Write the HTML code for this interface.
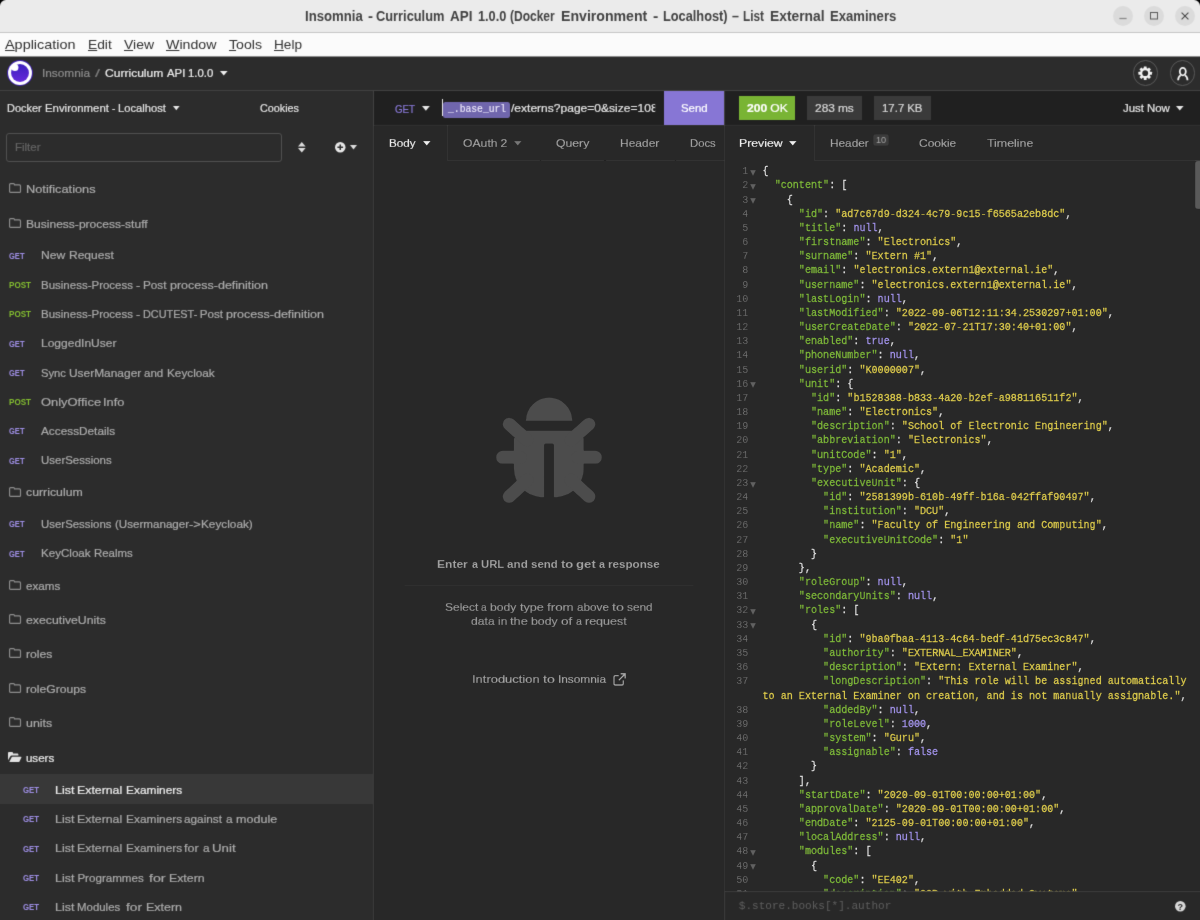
<!DOCTYPE html>
<html><head><meta charset="utf-8"><title>Insomnia</title>
<style>
html,body{margin:0;padding:0;}
body{width:1200px;height:920px;overflow:hidden;position:relative;background:#282828;font-family:"Liberation Sans",sans-serif;}
.t{position:absolute;white-space:pre;line-height:20px;transform-origin:0 50%;-webkit-text-stroke:0.22px currentColor;word-spacing:-0.3px;}
.b{position:absolute;}
.cl{position:absolute;left:762.5px;white-space:pre;font:10.1px/20px "Liberation Mono",monospace;color:#e2e2e2;-webkit-text-stroke:0.32px currentColor;}
.k{color:#7fb83b;}.s{color:#dbca4d;}.n{color:#a495ec;}
.ln{position:absolute;left:725px;width:23.4px;text-align:right;font:10.1px/20px "Liberation Mono",monospace;color:#727272;}
.fd{position:absolute;left:749.8px;width:0;height:0;border-left:3.1px solid transparent;border-right:3.1px solid transparent;border-top:6.4px solid #616161;}
svg{position:absolute;overflow:visible;}
</style></head><body><svg width="0" height="0" style="position:absolute"><filter id="soft" x="0" y="0" width="100%" height="100%" color-interpolation-filters="sRGB"><feConvolveMatrix order="3" kernelMatrix="0.015 0.085 0.015 0.085 0.6 0.085 0.015 0.085 0.015" edgeMode="duplicate" preserveAlpha="true"/></filter></svg><div id="root" style="position:absolute;left:0;top:0;width:1200px;height:920px;will-change:transform;filter:url(#soft)">

<!-- window chrome -->
<div class="b" style="left:0;top:0;width:1200px;height:33px;background:#000"></div>
<div class="b" style="left:0;top:0;width:1200px;height:32px;background:#ebebeb;border-radius:6px 6px 0 0;border-bottom:1px solid #c6c6c6"></div>
<div class="b" style="left:0;top:33px;width:1200px;height:23px;background:#fbfbfb"></div>
<div class="b" style="left:0;top:56px;width:1200px;height:1px;background:#8c8c8c"></div>
<div class="b" style="left:1112.7px;top:6px;width:20px;height:20px;border-radius:50%;background:#dbdbdb"></div>
<div class="b" style="left:1143.9px;top:6px;width:20px;height:20px;border-radius:50%;background:#dbdbdb"></div>
<div class="b" style="left:1175.3px;top:6px;width:20px;height:20px;border-radius:50%;background:#dbdbdb"></div>
<svg style="left:1112.7px;top:6px" width="20" height="20"><path d="M6.4 12.500h7.200" stroke="#8a8a8a" stroke-width="1.300" fill="none"/></svg>
<svg style="left:1143.9px;top:6px" width="20" height="20"><rect x="6.5" y="6.500" width="7" height="6.500" stroke="#5a5a5a" stroke-width="1" fill="none"/></svg>
<svg style="left:1175.3px;top:6px" width="20" height="20"><path d="M6.600 6.600l6.800 6.800M13.400 6.600l-6.800 6.800" stroke="#444" stroke-width="1.050" fill="none"/></svg>

<!-- app header -->
<div class="b" style="left:0;top:57px;width:1200px;height:33px;background:#2c2c2c"></div>
<div class="b" style="left:0;top:90px;width:1200px;height:1px;background:#414141"></div>
<svg style="left:6.85px;top:60.35px" width="26" height="26" viewBox="0 0 26 26"><defs><linearGradient id="lg" x1="0" y1="0" x2="0" y2="1"><stop offset="0" stop-color="#3c1fbd"/><stop offset="1" stop-color="#6529da"/></linearGradient></defs><circle cx="13" cy="13" r="12.9" fill="#3d1db4"/><circle cx="13" cy="13" r="11.95" fill="#fff"/><circle cx="13" cy="13" r="8.95" fill="url(#lg)"/><circle cx="7.9" cy="7.500" r="3.55" fill="#fff"/></svg>
<svg style="left:220px;top:70.8px" width="8" height="5"><path d="M0 0h7.6l-3.8 4.6z" fill="#eee"/></svg>
<!-- gear + user -->
<div class="b" style="left:1132.7px;top:60.300px;width:23.600px;height:23.600px;border:1px solid #595959;border-radius:50%"></div>
<div class="b" style="left:1169.9px;top:60.300px;width:23.600px;height:23.600px;border:1px solid #595959;border-radius:50%"></div>
<svg style="left:1138px;top:66px" width="14.400" height="14.400" viewBox="0 0 15 15"><g fill="#f4f4f4"><circle cx="7.500" cy="7.500" r="5.300"/><rect x="6" y=".4" width="3" height="14.200" rx=".4"/><rect x="6" y=".4" width="3" height="14.200" rx=".4" transform="rotate(45 7.500 7.500)"/><rect x="6" y=".4" width="3" height="14.200" rx=".4" transform="rotate(90 7.500 7.500)"/><rect x="6" y=".4" width="3" height="14.200" rx=".4" transform="rotate(135 7.500 7.500)"/></g><circle cx="7.500" cy="7.500" r="3" fill="#2c2c2c"/></svg>
<svg style="left:1175.500px;top:65.500px" width="14" height="16" viewBox="0 0 14 16"><ellipse cx="6.800" cy="5.600" rx="3" ry="3.700" fill="none" stroke="#f4f4f4" stroke-width="1.800"/><path d="M4.700 9.300C2.900 10.300 2.200 12 2.100 14.300M8.900 9.300C10.700 10.300 11.400 12 11.500 14.300" fill="none" stroke="#f4f4f4" stroke-width="1.800" stroke-linecap="butt"/></svg>

<!-- sidebar -->
<div class="b" style="left:0;top:91px;width:373px;height:829px;background:#2c2c2c"></div>
<div class="b" style="left:373px;top:91px;width:1px;height:829px;background:#414141"></div>
<div class="b" style="left:6px;top:133px;width:276px;height:29px;border:1px solid #505050;border-radius:3px;box-sizing:border-box"></div>
<svg style="left:173.2px;top:106.4px" width="7" height="5"><path d="M0 0h6.6l-3.3 4.2z" fill="#e6e6e6"/></svg>
<svg style="left:297.7px;top:141.7px" width="8" height="11"><path d="M0 4.4h7.6L3.8 0zM0 6h7.6L3.8 10.4z" fill="#ddd"/></svg>
<svg style="left:335px;top:141.7px" width="11" height="11" viewBox="0 0 11 11"><circle cx="5.25" cy="5.25" r="5.25" fill="#e8e8e8"/><path d="M5.25 2.4v5.7M2.4 5.25h5.7" stroke="#2c2c2c" stroke-width="1.5"/></svg>
<svg style="left:350px;top:145.2px" width="8" height="5"><path d="M0 0h7l-3.5 4.4z" fill="#ddd"/></svg>
<div class="b" style="left:0;top:774.3px;width:373px;height:29.4px;background:#383838"></div>

<!-- request pane -->
<div class="b" style="left:374px;top:91px;width:350px;height:34px;background:#202020"></div>
<div class="b" style="left:374px;top:125px;width:350px;height:1px;background:#363636"></div>
<div class="b" style="left:664px;top:91px;width:60px;height:34px;background:#8776d5"></div>
<div class="b" style="left:724px;top:91px;width:1px;height:829px;background:#414141"></div>
<svg style="left:422.2px;top:105.8px" width="8" height="5"><path d="M0 0h7.8l-3.9 4.7z" fill="#e8e8e8"/></svg>
<div class="b" style="left:442px;top:99px;width:1px;height:17px;background:#e8e8e8"></div>
<div class="b" style="left:443.3px;top:101.7px;width:67px;height:16.1px;background:#7066ad;border-radius:2.5px"></div>
<!-- request tabs -->
<div class="b" style="left:447px;top:125px;width:1px;height:36px;background:#414141"></div>
<div class="b" style="left:447px;top:160px;width:277px;height:1px;background:#414141"></div>
<div class="b" style="left:539.5px;top:160px;width:1.5px;height:1px;background:#282828"></div><div class="b" style="left:604px;top:160px;width:1.5px;height:1px;background:#282828"></div><div class="b" style="left:674.5px;top:160px;width:1.5px;height:1px;background:#282828"></div>
<svg style="left:422.5px;top:140.5px" width="8" height="5"><path d="M0 0h7.6l-3.8 4.6z" fill="#eee"/></svg>
<svg style="left:514.3px;top:140.5px" width="8" height="5"><path d="M0 0h7.6l-3.8 4.6z" fill="#777"/></svg>
<!-- bug -->
<svg style="left:485px;top:390px" width="130" height="125" viewBox="0 0 130 125">
<g fill="#4c4c4c" stroke="#4c4c4c" stroke-linecap="round">
<path d="M40.800 31A23.300 23.500 0 0 1 87.400 31z" stroke="none"/>
<path d="M40 40.800H88.300L98.800 48.500V78C98.800 95 86 107.300 68.900 107.300V55.200a1.500 1.500 0 0 0-1.500-1.500h-6.800a1.500 1.500 0 0 0-1.500 1.500V107.300C42 107.300 28.900 95 28.900 78V48.500z" stroke="none"/>
<path d="M24.200 34.200L42 50M103.900 34.200L86 50M17.500 67.300H35M110.500 67.300H93M24.200 106.500L42 90M103.900 106.500L86 90" stroke-width="13" fill="none"/>
</g></svg>
<div class="b" style="left:403.8px;top:585px;width:290px;height:1px;background:#3d3d3d"></div>
<svg style="left:613px;top:672.8px" width="13" height="13" viewBox="0 0 13 13"><path d="M10.3 7.2v3.6c0 .7-.5 1.2-1.2 1.2H2.2C1.5 12 1 11.500 1 10.800V3.900c0-.7.5-1.200 1.200-1.200h3.600" fill="none" stroke="#aaa" stroke-width="1.3"/><path d="M7.600.800h4.600v4.600M12 1L5.800 7.200" fill="none" stroke="#aaa" stroke-width="1.4"/></svg>

<!-- response pane -->
<div class="b" style="left:725px;top:91px;width:475px;height:34px;background:#202020"></div>
<div class="b" style="left:725px;top:125px;width:475px;height:1px;background:#363636"></div>
<div class="b" style="left:738.8px;top:96px;width:56.4px;height:24px;background:#79b434"></div>
<div class="b" style="left:807.2px;top:96px;width:54.8px;height:24px;background:#3a3a3a"></div>
<div class="b" style="left:874px;top:96px;width:57.2px;height:24px;background:#3a3a3a"></div>
<svg style="left:1176px;top:105.8px" width="8" height="5"><path d="M0 0h7.6l-3.8 4.6z" fill="#e6e6e6"/></svg>
<div class="b" style="left:813.8px;top:125px;width:1px;height:36px;background:#414141"></div>
<div class="b" style="left:813.8px;top:160px;width:387px;height:1px;background:#414141"></div>
<svg style="left:788.8px;top:140.5px" width="8" height="5"><path d="M0 0h7.6l-3.8 4.6z" fill="#eee"/></svg>
<div class="b" style="left:872.6px;top:133.6px;width:16px;height:12.8px;background:#3b3b3b;border-radius:3px"></div>
<div class="b" style="left:1195.4px;top:160.6px;width:5px;height:48.8px;background:#5a5a5a;border-radius:3px 0 0 3px"></div>

<span class="t" style="left:304.80px;top:6.35px;font:700 14px/20px 'Liberation Sans',sans-serif;color:#424242;transform:scaleX(0.9387);-webkit-text-stroke:0;">Insomnia</span>
<span class="t" style="left:367.50px;top:6.35px;font:700 14px/20px 'Liberation Sans',sans-serif;color:#424242;transform:scaleX(1.0702);-webkit-text-stroke:0;">-</span>
<span class="t" style="left:376.10px;top:6.35px;font:700 14px/20px 'Liberation Sans',sans-serif;color:#424242;transform:scaleX(0.9158);-webkit-text-stroke:0;">Curriculum</span>
<span class="t" style="left:450.10px;top:6.35px;font:700 14px/20px 'Liberation Sans',sans-serif;color:#424242;transform:scaleX(0.9596);-webkit-text-stroke:0;">API</span>
<span class="t" style="left:477.90px;top:6.35px;font:700 14px/20px 'Liberation Sans',sans-serif;color:#424242;transform:scaleX(0.9088);-webkit-text-stroke:0;">1.0.0</span>
<span class="t" style="left:510.30px;top:6.35px;font:700 14px/20px 'Liberation Sans',sans-serif;color:#424242;transform:scaleX(0.8573);-webkit-text-stroke:0;">(Docker</span>
<span class="t" style="left:560.50px;top:6.35px;font:700 14px/20px 'Liberation Sans',sans-serif;color:#424242;transform:scaleX(1.0084);-webkit-text-stroke:0;">Environment</span>
<span class="t" style="left:653.10px;top:6.35px;font:700 14px/20px 'Liberation Sans',sans-serif;color:#424242;transform:scaleX(1.1344);-webkit-text-stroke:0;">-</span>
<span class="t" style="left:662.70px;top:6.35px;font:700 14px/20px 'Liberation Sans',sans-serif;color:#424242;transform:scaleX(0.9127);-webkit-text-stroke:0;">Localhost)</span>
<span class="t" style="left:731.80px;top:6.35px;font:700 14px/20px 'Liberation Sans',sans-serif;color:#424242;transform:scaleX(0.8850);-webkit-text-stroke:0;">–</span>
<span class="t" style="left:742.90px;top:6.35px;font:700 14px/20px 'Liberation Sans',sans-serif;color:#424242;transform:scaleX(0.8397);-webkit-text-stroke:0;">List</span>
<span class="t" style="left:769.70px;top:6.35px;font:700 14px/20px 'Liberation Sans',sans-serif;color:#424242;transform:scaleX(0.9864);-webkit-text-stroke:0;">External</span>
<span class="t" style="left:829.50px;top:6.35px;font:700 14px/20px 'Liberation Sans',sans-serif;color:#424242;transform:scaleX(0.9361);-webkit-text-stroke:0;">Examiners</span>
<span class="t" style="left:5.00px;top:34.57px;font:400 13.5px/20px 'Liberation Sans',sans-serif;color:#303030;transform:scaleX(1.0672);-webkit-text-stroke:0;"><u>A</u>pplication</span>
<span class="t" style="left:88.00px;top:34.57px;font:400 13.5px/20px 'Liberation Sans',sans-serif;color:#303030;transform:scaleX(1.0201);-webkit-text-stroke:0;"><u>E</u>dit</span>
<span class="t" style="left:124.00px;top:34.57px;font:400 13.5px/20px 'Liberation Sans',sans-serif;color:#303030;transform:scaleX(1.0334);-webkit-text-stroke:0;"><u>V</u>iew</span>
<span class="t" style="left:166.00px;top:34.57px;font:400 13.5px/20px 'Liberation Sans',sans-serif;color:#303030;transform:scaleX(1.0514);-webkit-text-stroke:0;"><u>W</u>indow</span>
<span class="t" style="left:228.50px;top:34.57px;font:400 13.5px/20px 'Liberation Sans',sans-serif;color:#303030;transform:scaleX(1.0471);-webkit-text-stroke:0;"><u>T</u>ools</span>
<span class="t" style="left:274.00px;top:34.57px;font:400 13.5px/20px 'Liberation Sans',sans-serif;color:#303030;transform:scaleX(1.0084);-webkit-text-stroke:0;"><u>H</u>elp</span>
<span class="t" style="left:42.00px;top:63.28px;font:400 11.6px/20px 'Liberation Sans',sans-serif;color:#8c8c8c;transform:scaleX(1.0203);">Insomnia</span>
<span class="t" style="left:95.00px;top:63.28px;font:400 11.6px/20px 'Liberation Sans',sans-serif;color:#7c7c7c;transform:scaleX(1.5459);">/</span>
<span class="t" style="left:104.70px;top:63.28px;font:400 11.6px/20px 'Liberation Sans',sans-serif;color:#ececec;transform:scaleX(1.0402);">Curriculum</span>
<span class="t" style="left:166.70px;top:63.28px;font:400 11.6px/20px 'Liberation Sans',sans-serif;color:#ececec;transform:scaleX(0.9793);">API</span>
<span class="t" style="left:188.45px;top:63.28px;font:400 11.6px/20px 'Liberation Sans',sans-serif;color:#ececec;transform:scaleX(0.9807);">1.0.0</span>
<span class="t" style="left:7.10px;top:97.98px;font:400 11.6px/20px 'Liberation Sans',sans-serif;color:#e2e2e2;transform:scaleX(0.9433);">Docker</span>
<span class="t" style="left:45.35px;top:97.98px;font:400 11.6px/20px 'Liberation Sans',sans-serif;color:#e2e2e2;transform:scaleX(0.9817);">Environment</span>
<span class="t" style="left:112.10px;top:97.98px;font:400 11.6px/20px 'Liberation Sans',sans-serif;color:#e2e2e2;transform:scaleX(0.8774);">-</span>
<span class="t" style="left:117.85px;top:97.98px;font:400 11.6px/20px 'Liberation Sans',sans-serif;color:#e2e2e2;transform:scaleX(0.9649);">Localhost</span>
<span class="t" style="left:260.00px;top:97.98px;font:400 11.6px/20px 'Liberation Sans',sans-serif;color:#e2e2e2;transform:scaleX(0.9310);">Cookies</span>
<span class="t" style="left:14.50px;top:137.23px;font:400 11.6px/20px 'Liberation Sans',sans-serif;color:#646464;transform:scaleX(0.9897);">Filter</span>
<span class="t" style="left:25.90px;top:179.23px;font:400 11.6px/20px 'Liberation Sans',sans-serif;color:#aaaaaa;transform:scaleX(1.1020);">Notifications</span>
<span class="t" style="left:25.90px;top:213.73px;font:400 11.6px/20px 'Liberation Sans',sans-serif;color:#aaaaaa;transform:scaleX(1.0388);">Business-process-stuff</span>
<span class="t" style="left:25.90px;top:482.48px;font:400 11.6px/20px 'Liberation Sans',sans-serif;color:#aaaaaa;transform:scaleX(1.0623);">curriculum</span>
<span class="t" style="left:25.90px;top:575.58px;font:400 11.6px/20px 'Liberation Sans',sans-serif;color:#aaaaaa;transform:scaleX(1.0042);">exams</span>
<span class="t" style="left:25.90px;top:609.88px;font:400 11.6px/20px 'Liberation Sans',sans-serif;color:#aaaaaa;transform:scaleX(1.0583);">executiveUnits</span>
<span class="t" style="left:25.90px;top:644.18px;font:400 11.6px/20px 'Liberation Sans',sans-serif;color:#aaaaaa;transform:scaleX(1.0501);">roles</span>
<span class="t" style="left:25.90px;top:678.58px;font:400 11.6px/20px 'Liberation Sans',sans-serif;color:#aaaaaa;transform:scaleX(1.0495);">roleGroups</span>
<span class="t" style="left:25.90px;top:712.98px;font:400 11.6px/20px 'Liberation Sans',sans-serif;color:#aaaaaa;transform:scaleX(1.0694);">units</span>
<span class="t" style="left:25.90px;top:747.68px;font:400 11.6px/20px 'Liberation Sans',sans-serif;color:#e8e8e8;">users</span>
<span class="t" style="left:9.00px;top:245.67px;font:700 9.6px/20px 'Liberation Sans',sans-serif;color:#9f8fe6;transform:scaleX(0.7854);-webkit-text-stroke:0;">GET</span>
<span class="t" style="left:41.00px;top:245.48px;font:400 11.6px/20px 'Liberation Sans',sans-serif;color:#aaaaaa;transform:scaleX(1.0473);">New</span>
<span class="t" style="left:68.50px;top:245.48px;font:400 11.6px/20px 'Liberation Sans',sans-serif;color:#aaaaaa;transform:scaleX(1.0373);">Request</span>
<span class="t" style="left:9.00px;top:274.97px;font:700 9.6px/20px 'Liberation Sans',sans-serif;color:#84bf30;transform:scaleX(0.8421);-webkit-text-stroke:0;">POST</span>
<span class="t" style="left:41.00px;top:274.78px;font:400 11.6px/20px 'Liberation Sans',sans-serif;color:#aaaaaa;transform:scaleX(0.9914);">Business-Process</span>
<span class="t" style="left:136.00px;top:274.78px;font:400 11.6px/20px 'Liberation Sans',sans-serif;color:#aaaaaa;transform:scaleX(1.0968);">-</span>
<span class="t" style="left:143.00px;top:274.78px;font:400 11.6px/20px 'Liberation Sans',sans-serif;color:#aaaaaa;transform:scaleX(1.0128);">Post</span>
<span class="t" style="left:169.75px;top:274.78px;font:400 11.6px/20px 'Liberation Sans',sans-serif;color:#aaaaaa;transform:scaleX(1.0784);">process-definition</span>
<span class="t" style="left:9.00px;top:304.27px;font:700 9.6px/20px 'Liberation Sans',sans-serif;color:#84bf30;transform:scaleX(0.8421);-webkit-text-stroke:0;">POST</span>
<span class="t" style="left:41.00px;top:304.08px;font:400 11.6px/20px 'Liberation Sans',sans-serif;color:#aaaaaa;transform:scaleX(0.9914);">Business-Process</span>
<span class="t" style="left:136.00px;top:304.08px;font:400 11.6px/20px 'Liberation Sans',sans-serif;color:#aaaaaa;transform:scaleX(1.0968);">-</span>
<span class="t" style="left:143.00px;top:304.08px;font:400 11.6px/20px 'Liberation Sans',sans-serif;color:#aaaaaa;transform:scaleX(0.9358);">DCUTEST-</span>
<span class="t" style="left:199.75px;top:304.08px;font:400 11.6px/20px 'Liberation Sans',sans-serif;color:#aaaaaa;">Post</span>
<span class="t" style="left:226.25px;top:304.08px;font:400 11.6px/20px 'Liberation Sans',sans-serif;color:#aaaaaa;transform:scaleX(1.0784);">process-definition</span>
<span class="t" style="left:9.00px;top:333.57px;font:700 9.6px/20px 'Liberation Sans',sans-serif;color:#9f8fe6;transform:scaleX(0.7854);-webkit-text-stroke:0;">GET</span>
<span class="t" style="left:41.00px;top:333.38px;font:400 11.6px/20px 'Liberation Sans',sans-serif;color:#aaaaaa;transform:scaleX(1.0365);">LoggedInUser</span>
<span class="t" style="left:9.00px;top:362.87px;font:700 9.6px/20px 'Liberation Sans',sans-serif;color:#9f8fe6;transform:scaleX(0.7854);-webkit-text-stroke:0;">GET</span>
<span class="t" style="left:41.00px;top:362.68px;font:400 11.6px/20px 'Liberation Sans',sans-serif;color:#aaaaaa;transform:scaleX(0.9697);">Sync</span>
<span class="t" style="left:68.75px;top:362.68px;font:400 11.6px/20px 'Liberation Sans',sans-serif;color:#aaaaaa;transform:scaleX(1.0285);">UserManager</span>
<span class="t" style="left:144.25px;top:362.68px;font:400 11.6px/20px 'Liberation Sans',sans-serif;color:#aaaaaa;transform:scaleX(0.9952);">and</span>
<span class="t" style="left:167.25px;top:362.68px;font:400 11.6px/20px 'Liberation Sans',sans-serif;color:#aaaaaa;transform:scaleX(1.0149);">Keycloak</span>
<span class="t" style="left:9.00px;top:392.17px;font:700 9.6px/20px 'Liberation Sans',sans-serif;color:#84bf30;transform:scaleX(0.8421);-webkit-text-stroke:0;">POST</span>
<span class="t" style="left:40.80px;top:391.98px;font:400 11.6px/20px 'Liberation Sans',sans-serif;color:#aaaaaa;transform:scaleX(1.1146);">OnlyOffice</span>
<span class="t" style="left:103.20px;top:391.98px;font:400 11.6px/20px 'Liberation Sans',sans-serif;color:#aaaaaa;transform:scaleX(1.1011);">Info</span>
<span class="t" style="left:9.00px;top:421.37px;font:700 9.6px/20px 'Liberation Sans',sans-serif;color:#9f8fe6;transform:scaleX(0.7854);-webkit-text-stroke:0;">GET</span>
<span class="t" style="left:41.00px;top:421.18px;font:400 11.6px/20px 'Liberation Sans',sans-serif;color:#aaaaaa;transform:scaleX(1.0177);">AccessDetails</span>
<span class="t" style="left:9.00px;top:450.67px;font:700 9.6px/20px 'Liberation Sans',sans-serif;color:#9f8fe6;transform:scaleX(0.7854);-webkit-text-stroke:0;">GET</span>
<span class="t" style="left:41.00px;top:450.48px;font:400 11.6px/20px 'Liberation Sans',sans-serif;color:#aaaaaa;transform:scaleX(0.9884);">UserSessions</span>
<span class="t" style="left:9.00px;top:514.17px;font:700 9.6px/20px 'Liberation Sans',sans-serif;color:#9f8fe6;transform:scaleX(0.7854);-webkit-text-stroke:0;">GET</span>
<span class="t" style="left:41.00px;top:513.98px;font:400 11.6px/20px 'Liberation Sans',sans-serif;color:#aaaaaa;transform:scaleX(0.9856);">UserSessions</span>
<span class="t" style="left:115.00px;top:513.98px;font:400 11.6px/20px 'Liberation Sans',sans-serif;color:#aaaaaa;">(Usermanager</span>
<span class="t" style="left:189.25px;top:513.98px;font:400 11.6px/20px 'Liberation Sans',sans-serif;color:#aaaaaa;transform:scaleX(1.1043);">-&gt;</span>
<span class="t" style="left:201.25px;top:513.98px;font:400 11.6px/20px 'Liberation Sans',sans-serif;color:#aaaaaa;transform:scaleX(1.0166);">Keycloak)</span>
<span class="t" style="left:9.00px;top:543.57px;font:700 9.6px/20px 'Liberation Sans',sans-serif;color:#9f8fe6;transform:scaleX(0.7854);-webkit-text-stroke:0;">GET</span>
<span class="t" style="left:41.00px;top:543.38px;font:400 11.6px/20px 'Liberation Sans',sans-serif;color:#aaaaaa;">KeyCloak</span>
<span class="t" style="left:94.25px;top:543.38px;font:400 11.6px/20px 'Liberation Sans',sans-serif;color:#aaaaaa;transform:scaleX(0.9857);">Realms</span>
<span class="t" style="left:23.30px;top:780.17px;font:700 9.6px/20px 'Liberation Sans',sans-serif;color:#9f8fe6;transform:scaleX(0.8108);-webkit-text-stroke:0;">GET</span>
<span class="t" style="left:55.00px;top:779.98px;font:400 11.6px/20px 'Liberation Sans',sans-serif;color:#ececec;transform:scaleX(1.0750);">List</span>
<span class="t" style="left:77.40px;top:779.98px;font:400 11.6px/20px 'Liberation Sans',sans-serif;color:#ececec;transform:scaleX(1.0627);">External</span>
<span class="t" style="left:125.80px;top:779.98px;font:400 11.6px/20px 'Liberation Sans',sans-serif;color:#ececec;transform:scaleX(1.0262);">Examiners</span>
<span class="t" style="left:23.30px;top:809.37px;font:700 9.6px/20px 'Liberation Sans',sans-serif;color:#9f8fe6;transform:scaleX(0.8108);-webkit-text-stroke:0;">GET</span>
<span class="t" style="left:55.00px;top:809.18px;font:400 11.6px/20px 'Liberation Sans',sans-serif;color:#aaaaaa;transform:scaleX(1.0750);">List</span>
<span class="t" style="left:77.40px;top:809.18px;font:400 11.6px/20px 'Liberation Sans',sans-serif;color:#aaaaaa;transform:scaleX(1.0627);">External</span>
<span class="t" style="left:125.80px;top:809.18px;font:400 11.6px/20px 'Liberation Sans',sans-serif;color:#aaaaaa;transform:scaleX(1.0262);">Examiners</span>
<span class="t" style="left:184.40px;top:809.18px;font:400 11.6px/20px 'Liberation Sans',sans-serif;color:#aaaaaa;transform:scaleX(1.0163);">against</span>
<span class="t" style="left:226.40px;top:809.18px;font:400 11.6px/20px 'Liberation Sans',sans-serif;color:#aaaaaa;transform:scaleX(1.0228);">a</span>
<span class="t" style="left:235.80px;top:809.18px;font:400 11.6px/20px 'Liberation Sans',sans-serif;color:#aaaaaa;transform:scaleX(1.0833);">module</span>
<span class="t" style="left:23.30px;top:838.67px;font:700 9.6px/20px 'Liberation Sans',sans-serif;color:#9f8fe6;transform:scaleX(0.8108);-webkit-text-stroke:0;">GET</span>
<span class="t" style="left:55.00px;top:838.48px;font:400 11.6px/20px 'Liberation Sans',sans-serif;color:#aaaaaa;transform:scaleX(1.0750);">List</span>
<span class="t" style="left:77.40px;top:838.48px;font:400 11.6px/20px 'Liberation Sans',sans-serif;color:#aaaaaa;transform:scaleX(1.0627);">External</span>
<span class="t" style="left:125.80px;top:838.48px;font:400 11.6px/20px 'Liberation Sans',sans-serif;color:#aaaaaa;transform:scaleX(1.0262);">Examiners</span>
<span class="t" style="left:184.40px;top:838.48px;font:400 11.6px/20px 'Liberation Sans',sans-serif;color:#aaaaaa;transform:scaleX(1.0790);">for</span>
<span class="t" style="left:203.00px;top:838.48px;font:400 11.6px/20px 'Liberation Sans',sans-serif;color:#aaaaaa;transform:scaleX(1.0228);">a</span>
<span class="t" style="left:212.40px;top:838.48px;font:400 11.6px/20px 'Liberation Sans',sans-serif;color:#aaaaaa;transform:scaleX(1.1442);">Unit</span>
<span class="t" style="left:23.30px;top:867.87px;font:700 9.6px/20px 'Liberation Sans',sans-serif;color:#9f8fe6;transform:scaleX(0.8108);-webkit-text-stroke:0;">GET</span>
<span class="t" style="left:55.00px;top:867.68px;font:400 11.6px/20px 'Liberation Sans',sans-serif;color:#aaaaaa;transform:scaleX(1.0750);">List</span>
<span class="t" style="left:77.40px;top:867.68px;font:400 11.6px/20px 'Liberation Sans',sans-serif;color:#aaaaaa;">Programmes</span>
<span class="t" style="left:148.80px;top:867.68px;font:400 11.6px/20px 'Liberation Sans',sans-serif;color:#aaaaaa;transform:scaleX(1.2268);">for</span>
<span class="t" style="left:168.80px;top:867.68px;font:400 11.6px/20px 'Liberation Sans',sans-serif;color:#aaaaaa;transform:scaleX(1.0622);">Extern</span>
<span class="t" style="left:23.30px;top:897.07px;font:700 9.6px/20px 'Liberation Sans',sans-serif;color:#9f8fe6;transform:scaleX(0.8108);-webkit-text-stroke:0;">GET</span>
<span class="t" style="left:55.00px;top:896.88px;font:400 11.6px/20px 'Liberation Sans',sans-serif;color:#aaaaaa;transform:scaleX(1.0750);">List</span>
<span class="t" style="left:77.40px;top:896.88px;font:400 11.6px/20px 'Liberation Sans',sans-serif;color:#aaaaaa;transform:scaleX(0.9857);">Modules</span>
<span class="t" style="left:126.40px;top:896.88px;font:400 11.6px/20px 'Liberation Sans',sans-serif;color:#aaaaaa;transform:scaleX(1.1824);">for</span>
<span class="t" style="left:146.00px;top:896.88px;font:400 11.6px/20px 'Liberation Sans',sans-serif;color:#aaaaaa;transform:scaleX(1.0741);">Extern</span>
<span class="t" style="left:394.70px;top:98.78px;font:400 11.6px/20px 'Liberation Sans',sans-serif;color:#8979d8;transform:scaleX(0.8430);">GET</span>
<span class="t" style="left:447.60px;top:100.21px;font:400 10.1px/20px 'Liberation Mono',monospace;color:#ece8fa;transform:scaleX(0.9607);-webkit-text-stroke:0.15px currentColor;">_.base_url</span>
<span class="t" style="left:511.20px;top:98.28px;font:400 11.6px/20px 'Liberation Sans',sans-serif;color:#e4e4e4;transform:scaleX(1.0385);clip-path:inset(0 2.3px 0 0);">/externs?page=0&amp;size=108</span>
<span class="t" style="left:680.70px;top:98.48px;font:400 11.6px/20px 'Liberation Sans',sans-serif;color:#fff;transform:scaleX(0.9823);">Send</span>
<span class="t" style="left:388.70px;top:132.73px;font:400 11.6px/20px 'Liberation Sans',sans-serif;color:#e8e8e8;transform:scaleX(1.0043);">Body</span>
<span class="t" style="left:463.30px;top:132.68px;font:400 11.6px/20px 'Liberation Sans',sans-serif;color:#a2a2a2;transform:scaleX(1.0509);">OAuth 2</span>
<span class="t" style="left:555.70px;top:132.68px;font:400 11.6px/20px 'Liberation Sans',sans-serif;color:#a2a2a2;transform:scaleX(1.0545);">Query</span>
<span class="t" style="left:620.00px;top:132.68px;font:400 11.6px/20px 'Liberation Sans',sans-serif;color:#a2a2a2;transform:scaleX(1.0334);">Header</span>
<span class="t" style="left:690.30px;top:132.68px;font:400 11.6px/20px 'Liberation Sans',sans-serif;color:#a2a2a2;transform:scaleX(0.9727);">Docs</span>
<span class="t" style="left:437.20px;top:554.48px;font:700 11.6px/20px 'Liberation Sans',sans-serif;color:#a0a0a0;transform:scaleX(1.0391);-webkit-text-stroke:0;">Enter</span>
<span class="t" style="left:471.60px;top:554.48px;font:700 11.6px/20px 'Liberation Sans',sans-serif;color:#a0a0a0;transform:scaleX(0.9298);-webkit-text-stroke:0;">a</span>
<span class="t" style="left:481.20px;top:554.48px;font:700 11.6px/20px 'Liberation Sans',sans-serif;color:#a0a0a0;transform:scaleX(0.9736);-webkit-text-stroke:0;">URL</span>
<span class="t" style="left:507.20px;top:554.48px;font:700 11.6px/20px 'Liberation Sans',sans-serif;color:#a0a0a0;transform:scaleX(1.0085);-webkit-text-stroke:0;">and</span>
<span class="t" style="left:531.20px;top:554.48px;font:700 11.6px/20px 'Liberation Sans',sans-serif;color:#a0a0a0;transform:scaleX(0.9903);-webkit-text-stroke:0;">send</span>
<span class="t" style="left:560.60px;top:554.48px;font:700 11.6px/20px 'Liberation Sans',sans-serif;color:#a0a0a0;transform:scaleX(1.1321);-webkit-text-stroke:0;">to</span>
<span class="t" style="left:576.20px;top:554.48px;font:700 11.6px/20px 'Liberation Sans',sans-serif;color:#a0a0a0;transform:scaleX(1.1385);-webkit-text-stroke:0;">get</span>
<span class="t" style="left:598.60px;top:554.48px;font:700 11.6px/20px 'Liberation Sans',sans-serif;color:#a0a0a0;transform:scaleX(0.9298);-webkit-text-stroke:0;">a</span>
<span class="t" style="left:608.20px;top:554.48px;font:700 11.6px/20px 'Liberation Sans',sans-serif;color:#a0a0a0;transform:scaleX(1.0046);-webkit-text-stroke:0;">response</span>
<span class="t" style="left:444.70px;top:597.38px;font:400 11.6px/20px 'Liberation Sans',sans-serif;color:#999999;transform:scaleX(1.0331);">Select</span>
<span class="t" style="left:481.30px;top:597.38px;font:400 11.6px/20px 'Liberation Sans',sans-serif;color:#999999;transform:scaleX(0.8833);">a</span>
<span class="t" style="left:490.30px;top:597.38px;font:400 11.6px/20px 'Liberation Sans',sans-serif;color:#999999;transform:scaleX(1.0461);">body</span>
<span class="t" style="left:520.10px;top:597.38px;font:400 11.6px/20px 'Liberation Sans',sans-serif;color:#999999;transform:scaleX(1.0902);">type</span>
<span class="t" style="left:546.70px;top:597.38px;font:400 11.6px/20px 'Liberation Sans',sans-serif;color:#999999;transform:scaleX(1.1515);">from</span>
<span class="t" style="left:576.70px;top:597.38px;font:400 11.6px/20px 'Liberation Sans',sans-serif;color:#999999;transform:scaleX(1.0097);">above</span>
<span class="t" style="left:611.70px;top:597.38px;font:400 11.6px/20px 'Liberation Sans',sans-serif;color:#999999;transform:scaleX(1.2304);">to</span>
<span class="t" style="left:626.70px;top:597.38px;font:400 11.6px/20px 'Liberation Sans',sans-serif;color:#999999;transform:scaleX(1.0222);">send</span>
<span class="t" style="left:470.70px;top:611.18px;font:400 11.6px/20px 'Liberation Sans',sans-serif;color:#999999;transform:scaleX(1.0497);">data</span>
<span class="t" style="left:497.70px;top:611.18px;font:400 11.6px/20px 'Liberation Sans',sans-serif;color:#999999;transform:scaleX(1.0298);">in</span>
<span class="t" style="left:510.10px;top:611.18px;font:400 11.6px/20px 'Liberation Sans',sans-serif;color:#999999;transform:scaleX(1.1101);">the</span>
<span class="t" style="left:531.30px;top:611.18px;font:400 11.6px/20px 'Liberation Sans',sans-serif;color:#999999;transform:scaleX(1.0620);">body</span>
<span class="t" style="left:561.10px;top:611.18px;font:400 11.6px/20px 'Liberation Sans',sans-serif;color:#999999;transform:scaleX(1.1683);">of</span>
<span class="t" style="left:575.70px;top:611.18px;font:400 11.6px/20px 'Liberation Sans',sans-serif;color:#999999;transform:scaleX(0.9143);">a</span>
<span class="t" style="left:585.30px;top:611.18px;font:400 11.6px/20px 'Liberation Sans',sans-serif;color:#999999;transform:scaleX(1.0783);">request</span>
<span class="t" style="left:472.00px;top:669.48px;font:400 11.6px/20px 'Liberation Sans',sans-serif;color:#a2a2a2;transform:scaleX(1.1156);">Introduction</span>
<span class="t" style="left:542.60px;top:669.48px;font:400 11.6px/20px 'Liberation Sans',sans-serif;color:#a2a2a2;transform:scaleX(1.2200);">to</span>
<span class="t" style="left:557.60px;top:669.48px;font:400 11.6px/20px 'Liberation Sans',sans-serif;color:#a2a2a2;transform:scaleX(1.0203);">Insomnia</span>
<span class="t" style="left:746.80px;top:98.48px;font:400 11.6px/20px 'Liberation Sans',sans-serif;color:#fff;transform:scaleX(1.0453);"><b>200</b> OK</span>
<span class="t" style="left:815.20px;top:98.48px;font:400 11.6px/20px 'Liberation Sans',sans-serif;color:#d8d8d8;transform:scaleX(1.0282);">283 ms</span>
<span class="t" style="left:882.40px;top:98.48px;font:400 11.6px/20px 'Liberation Sans',sans-serif;color:#d8d8d8;transform:scaleX(0.9865);">17.7 KB</span>
<span class="t" style="left:1123.20px;top:98.48px;font:400 11.6px/20px 'Liberation Sans',sans-serif;color:#e6e6e6;transform:scaleX(0.9875);">Just Now</span>
<span class="t" style="left:739.20px;top:132.68px;font:400 11.6px/20px 'Liberation Sans',sans-serif;color:#eee;transform:scaleX(1.0570);">Preview</span>
<span class="t" style="left:830.40px;top:132.68px;font:400 11.6px/20px 'Liberation Sans',sans-serif;color:#a2a2a2;transform:scaleX(1.0202);">Header</span>
<span class="t" style="left:919.20px;top:132.68px;font:400 11.6px/20px 'Liberation Sans',sans-serif;color:#a2a2a2;transform:scaleX(1.0306);">Cookie</span>
<span class="t" style="left:987.20px;top:132.68px;font:400 11.6px/20px 'Liberation Sans',sans-serif;color:#a2a2a2;transform:scaleX(1.0694);">Timeline</span>
<span class="t" style="left:875.60px;top:130.31px;font:400 9.5px/20px 'Liberation Sans',sans-serif;color:#a6a6a6;transform:scaleX(0.9643);-webkit-text-stroke:0;">10</span>
<svg style="left:9px;top:183.35px" width="12" height="10" viewBox="0 0 12 10"><path d="M1.6.6h2.9c.5 0 1 .4 1 1v.3h5c.6 0 1 .4 1 1v5.5c0 .6-.4 1-1 1H1.6c-.6 0-1-.4-1-1V1.600c0-.6.4-1 1-1z" fill="none" stroke="#8e8e8e" stroke-width="1.15"/></svg>
<svg style="left:9px;top:217.85px" width="12" height="10" viewBox="0 0 12 10"><path d="M1.6.6h2.9c.5 0 1 .4 1 1v.3h5c.6 0 1 .4 1 1v5.5c0 .6-.4 1-1 1H1.6c-.6 0-1-.4-1-1V1.600c0-.6.4-1 1-1z" fill="none" stroke="#8e8e8e" stroke-width="1.15"/></svg>
<svg style="left:9px;top:486.60px" width="12" height="10" viewBox="0 0 12 10"><path d="M1.6.6h2.9c.5 0 1 .4 1 1v.3h5c.6 0 1 .4 1 1v5.5c0 .6-.4 1-1 1H1.6c-.6 0-1-.4-1-1V1.600c0-.6.4-1 1-1z" fill="none" stroke="#8e8e8e" stroke-width="1.15"/></svg>
<svg style="left:9px;top:579.70px" width="12" height="10" viewBox="0 0 12 10"><path d="M1.6.6h2.9c.5 0 1 .4 1 1v.3h5c.6 0 1 .4 1 1v5.5c0 .6-.4 1-1 1H1.6c-.6 0-1-.4-1-1V1.600c0-.6.4-1 1-1z" fill="none" stroke="#8e8e8e" stroke-width="1.15"/></svg>
<svg style="left:9px;top:614.00px" width="12" height="10" viewBox="0 0 12 10"><path d="M1.6.6h2.9c.5 0 1 .4 1 1v.3h5c.6 0 1 .4 1 1v5.5c0 .6-.4 1-1 1H1.6c-.6 0-1-.4-1-1V1.600c0-.6.4-1 1-1z" fill="none" stroke="#8e8e8e" stroke-width="1.15"/></svg>
<svg style="left:9px;top:648.30px" width="12" height="10" viewBox="0 0 12 10"><path d="M1.6.6h2.9c.5 0 1 .4 1 1v.3h5c.6 0 1 .4 1 1v5.5c0 .6-.4 1-1 1H1.6c-.6 0-1-.4-1-1V1.600c0-.6.4-1 1-1z" fill="none" stroke="#8e8e8e" stroke-width="1.15"/></svg>
<svg style="left:9px;top:682.70px" width="12" height="10" viewBox="0 0 12 10"><path d="M1.6.6h2.9c.5 0 1 .4 1 1v.3h5c.6 0 1 .4 1 1v5.5c0 .6-.4 1-1 1H1.6c-.6 0-1-.4-1-1V1.600c0-.6.4-1 1-1z" fill="none" stroke="#8e8e8e" stroke-width="1.15"/></svg>
<svg style="left:9px;top:717.10px" width="12" height="10" viewBox="0 0 12 10"><path d="M1.6.6h2.9c.5 0 1 .4 1 1v.3h5c.6 0 1 .4 1 1v5.5c0 .6-.4 1-1 1H1.6c-.6 0-1-.4-1-1V1.600c0-.6.4-1 1-1z" fill="none" stroke="#8e8e8e" stroke-width="1.15"/></svg>
<svg style="left:8.3px;top:751.80px" width="14" height="10" viewBox="0 0 14 10"><path d="M0 8.300V1.100C0 .5.5 0 1.100 0h2.800c.6 0 1.100.5 1.100 1.100v.4h4.300c.6 0 1.100.5 1.100 1.100v1H3.700c-.6 0-1.200.4-1.500.9z" fill="#e2e2e2"/><path d="M1.300 10l2.200-4.600c.2-.4.6-.6 1-.6h8.500c.4 0 .6.3.4.7l-1.900 3.900c-.2.4-.6.6-1 .6z" fill="#e2e2e2"/></svg>
<div class="cl" style="top:162.16px">{</div>
<div class="ln" style="top:162.16px">1</div>
<div class="fd" style="top:169.80px"></div>
<div class="cl" style="top:176.33px">  <span class="k">"content"</span>: [</div>
<div class="ln" style="top:176.33px">2</div>
<div class="fd" style="top:183.97px"></div>
<div class="cl" style="top:190.50px">    {</div>
<div class="ln" style="top:190.50px">3</div>
<div class="fd" style="top:198.14px"></div>
<div class="cl" style="top:204.67px">      <span class="k">"id"</span>: <span class="s">"ad7c67d9-d324-4c79-9c15-f6565a2eb8dc"</span>,</div>
<div class="ln" style="top:204.67px">4</div>
<div class="cl" style="top:218.85px">      <span class="k">"title"</span>: <span class="n">null</span>,</div>
<div class="ln" style="top:218.85px">5</div>
<div class="cl" style="top:233.02px">      <span class="k">"firstname"</span>: <span class="s">"Electronics"</span>,</div>
<div class="ln" style="top:233.02px">6</div>
<div class="cl" style="top:247.19px">      <span class="k">"surname"</span>: <span class="s">"Extern #1"</span>,</div>
<div class="ln" style="top:247.19px">7</div>
<div class="cl" style="top:261.36px">      <span class="k">"email"</span>: <span class="s">"electronics.extern1@external.ie"</span>,</div>
<div class="ln" style="top:261.36px">8</div>
<div class="cl" style="top:275.53px">      <span class="k">"username"</span>: <span class="s">"electronics.extern1@external.ie"</span>,</div>
<div class="ln" style="top:275.53px">9</div>
<div class="cl" style="top:289.71px">      <span class="k">"lastLogin"</span>: <span class="n">null</span>,</div>
<div class="ln" style="top:289.71px">10</div>
<div class="cl" style="top:303.88px">      <span class="k">"lastModified"</span>: <span class="s">"2022-09-06T12:11:34.2530297+01:00"</span>,</div>
<div class="ln" style="top:303.88px">11</div>
<div class="cl" style="top:318.05px">      <span class="k">"userCreateDate"</span>: <span class="s">"2022-07-21T17:30:40+01:00"</span>,</div>
<div class="ln" style="top:318.05px">12</div>
<div class="cl" style="top:332.22px">      <span class="k">"enabled"</span>: <span class="n">true</span>,</div>
<div class="ln" style="top:332.22px">13</div>
<div class="cl" style="top:346.39px">      <span class="k">"phoneNumber"</span>: <span class="n">null</span>,</div>
<div class="ln" style="top:346.39px">14</div>
<div class="cl" style="top:360.57px">      <span class="k">"userid"</span>: <span class="s">"K0000007"</span>,</div>
<div class="ln" style="top:360.57px">15</div>
<div class="cl" style="top:374.74px">      <span class="k">"unit"</span>: {</div>
<div class="ln" style="top:374.74px">16</div>
<div class="fd" style="top:382.38px"></div>
<div class="cl" style="top:388.91px">        <span class="k">"id"</span>: <span class="s">"b1528388-b833-4a20-b2ef-a988116511f2"</span>,</div>
<div class="ln" style="top:388.91px">17</div>
<div class="cl" style="top:403.08px">        <span class="k">"name"</span>: <span class="s">"Electronics"</span>,</div>
<div class="ln" style="top:403.08px">18</div>
<div class="cl" style="top:417.25px">        <span class="k">"description"</span>: <span class="s">"School of Electronic Engineering"</span>,</div>
<div class="ln" style="top:417.25px">19</div>
<div class="cl" style="top:431.43px">        <span class="k">"abbreviation"</span>: <span class="s">"Electronics"</span>,</div>
<div class="ln" style="top:431.43px">20</div>
<div class="cl" style="top:445.60px">        <span class="k">"unitCode"</span>: <span class="s">"1"</span>,</div>
<div class="ln" style="top:445.60px">21</div>
<div class="cl" style="top:459.77px">        <span class="k">"type"</span>: <span class="s">"Academic"</span>,</div>
<div class="ln" style="top:459.77px">22</div>
<div class="cl" style="top:473.94px">        <span class="k">"executiveUnit"</span>: {</div>
<div class="ln" style="top:473.94px">23</div>
<div class="fd" style="top:481.58px"></div>
<div class="cl" style="top:488.11px">          <span class="k">"id"</span>: <span class="s">"2581399b-610b-49ff-b16a-042ffaf90497"</span>,</div>
<div class="ln" style="top:488.11px">24</div>
<div class="cl" style="top:502.29px">          <span class="k">"institution"</span>: <span class="s">"DCU"</span>,</div>
<div class="ln" style="top:502.29px">25</div>
<div class="cl" style="top:516.46px">          <span class="k">"name"</span>: <span class="s">"Faculty of Engineering and Computing"</span>,</div>
<div class="ln" style="top:516.46px">26</div>
<div class="cl" style="top:530.63px">          <span class="k">"executiveUnitCode"</span>: <span class="s">"1"</span></div>
<div class="ln" style="top:530.63px">27</div>
<div class="cl" style="top:544.80px">        }</div>
<div class="ln" style="top:544.80px">28</div>
<div class="cl" style="top:558.97px">      },</div>
<div class="ln" style="top:558.97px">29</div>
<div class="cl" style="top:573.15px">      <span class="k">"roleGroup"</span>: <span class="n">null</span>,</div>
<div class="ln" style="top:573.15px">30</div>
<div class="cl" style="top:587.32px">      <span class="k">"secondaryUnits"</span>: <span class="n">null</span>,</div>
<div class="ln" style="top:587.32px">31</div>
<div class="cl" style="top:601.49px">      <span class="k">"roles"</span>: [</div>
<div class="ln" style="top:601.49px">32</div>
<div class="fd" style="top:609.13px"></div>
<div class="cl" style="top:615.66px">        {</div>
<div class="ln" style="top:615.66px">33</div>
<div class="fd" style="top:623.30px"></div>
<div class="cl" style="top:629.83px">          <span class="k">"id"</span>: <span class="s">"9ba0fbaa-4113-4c64-bedf-41d75ec3c847"</span>,</div>
<div class="ln" style="top:629.83px">34</div>
<div class="cl" style="top:644.01px">          <span class="k">"authority"</span>: <span class="s">"EXTERNAL_EXAMINER"</span>,</div>
<div class="ln" style="top:644.01px">35</div>
<div class="cl" style="top:658.18px">          <span class="k">"description"</span>: <span class="s">"Extern: External Examiner"</span>,</div>
<div class="ln" style="top:658.18px">36</div>
<div class="cl" style="top:672.35px">          <span class="k">"longDescription"</span>: <span class="s">"This role will be assigned automatically</span></div>
<div class="ln" style="top:672.35px">37</div>
<div class="cl" style="top:686.52px"><span class="s">to an External Examiner on creation, and is not manually assignable."</span>,</div>
<div class="cl" style="top:700.69px">          <span class="k">"addedBy"</span>: <span class="n">null</span>,</div>
<div class="ln" style="top:700.69px">38</div>
<div class="cl" style="top:714.87px">          <span class="k">"roleLevel"</span>: <span class="n">1000</span>,</div>
<div class="ln" style="top:714.87px">39</div>
<div class="cl" style="top:729.04px">          <span class="k">"system"</span>: <span class="s">"Guru"</span>,</div>
<div class="ln" style="top:729.04px">40</div>
<div class="cl" style="top:743.21px">          <span class="k">"assignable"</span>: <span class="n">false</span></div>
<div class="ln" style="top:743.21px">41</div>
<div class="cl" style="top:757.38px">        }</div>
<div class="ln" style="top:757.38px">42</div>
<div class="cl" style="top:771.55px">      ],</div>
<div class="ln" style="top:771.55px">43</div>
<div class="cl" style="top:785.73px">      <span class="k">"startDate"</span>: <span class="s">"2020-09-01T00:00:00+01:00"</span>,</div>
<div class="ln" style="top:785.73px">44</div>
<div class="cl" style="top:799.90px">      <span class="k">"approvalDate"</span>: <span class="s">"2020-09-01T00:00:00+01:00"</span>,</div>
<div class="ln" style="top:799.90px">45</div>
<div class="cl" style="top:814.07px">      <span class="k">"endDate"</span>: <span class="s">"2125-09-01T00:00:00+01:00"</span>,</div>
<div class="ln" style="top:814.07px">46</div>
<div class="cl" style="top:828.24px">      <span class="k">"localAddress"</span>: <span class="n">null</span>,</div>
<div class="ln" style="top:828.24px">47</div>
<div class="cl" style="top:842.41px">      <span class="k">"modules"</span>: [</div>
<div class="ln" style="top:842.41px">48</div>
<div class="fd" style="top:850.06px"></div>
<div class="cl" style="top:856.59px">        {</div>
<div class="ln" style="top:856.59px">49</div>
<div class="fd" style="top:864.23px"></div>
<div class="cl" style="top:870.76px">          <span class="k">"code"</span>: <span class="s">"EE402"</span>,</div>
<div class="ln" style="top:870.76px">50</div>
<div class="cl" style="top:884.93px">          <span class="k">"description"</span>: <span class="s">"OOP with Embedded Systems"</span>,</div>
<div class="ln" style="top:884.93px">51</div>

<div class="b" style="left:725px;top:890.5px;width:475px;height:29.5px;background:#282828;border-top:1px solid #424242;box-sizing:border-box"></div>
<svg style="left:1174.8px;top:901.2px" width="11" height="11" viewBox="0 0 11 11"><circle cx="5.3" cy="5.3" r="5.3" fill="#d8d8d8"/><text x="5.3" y="8.6" text-anchor="middle" font-family="Liberation Sans" font-weight="700" font-size="9" fill="#282828">?</text></svg>
<span class="t" style="left:738.8px;top:896.05px;font:11.05px/20px 'Liberation Mono',monospace;color:#5e5e5e;-webkit-text-stroke:0">$.store.books[*].author</span>

</div></body></html>
